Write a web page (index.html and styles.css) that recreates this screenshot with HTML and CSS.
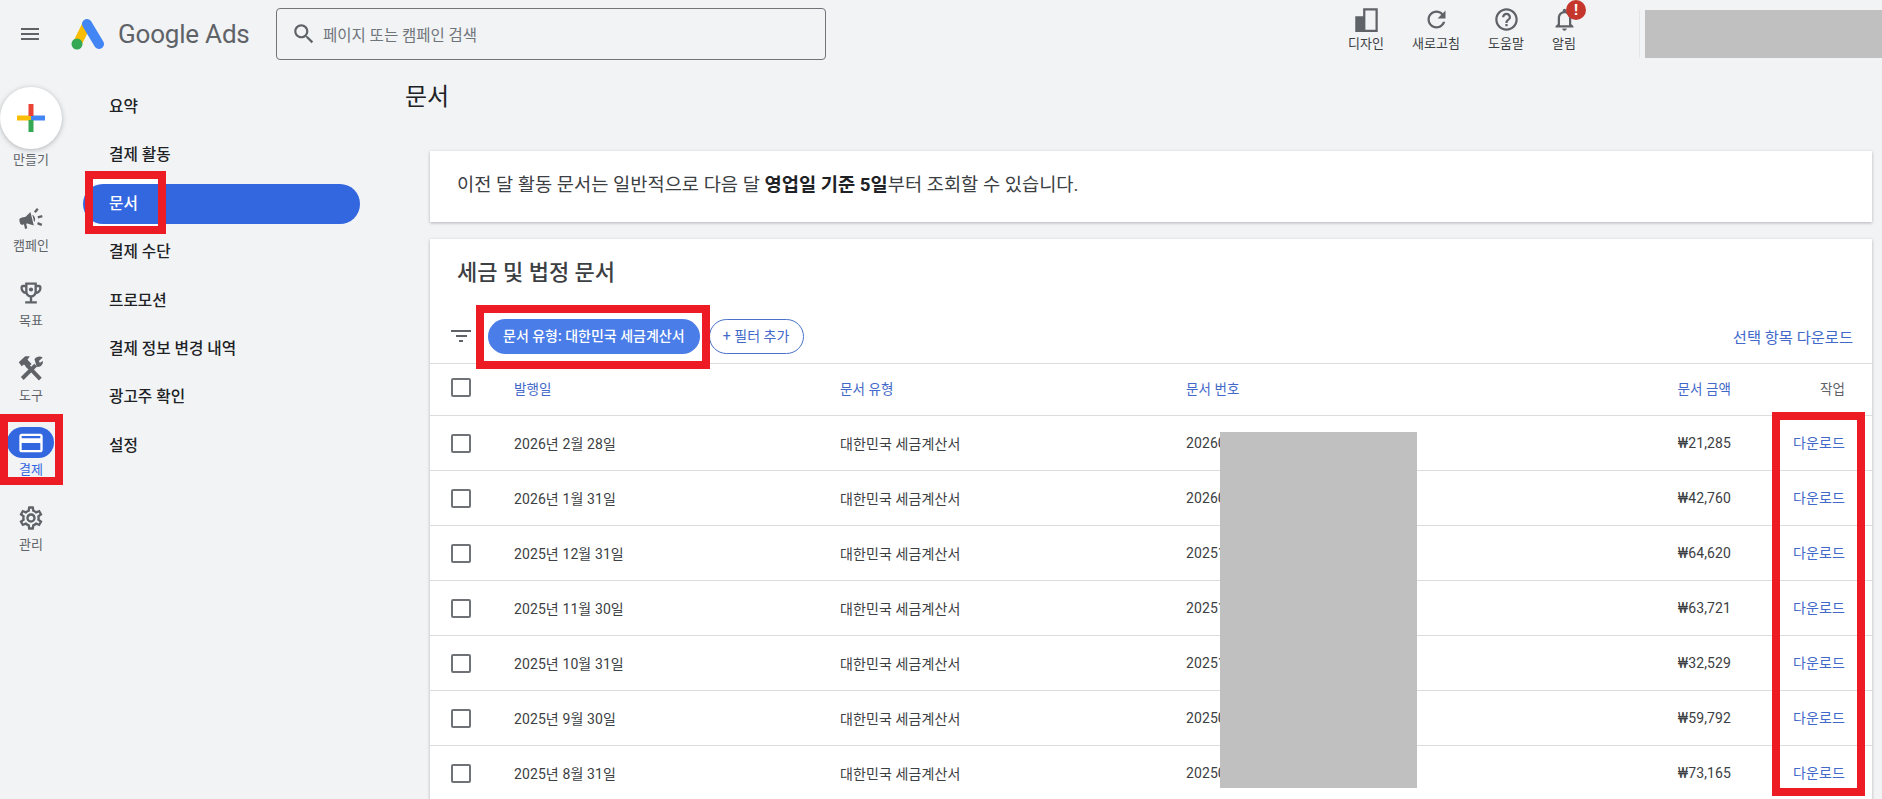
FILE: index.html
```html
<!DOCTYPE html>
<html lang="ko">

<head>
  <meta charset="UTF-8">
  <title>Google Ads - 문서</title>
  <link rel="stylesheet" href="styles.css">
</head>

<body>
  <header class="topbar">
    <svg class="menu-icon" viewBox="0 0 24 24"><path d="M3 18h18v-2H3v2zm0-5h18v-2H3v2zm0-7v2h18V6H3z"/></svg>
    <svg class="logo" viewBox="0 0 36 32">
      <path d="M17 6 L7 26" stroke="#fbbc04" stroke-width="9" stroke-linecap="round"/>
      <path d="M17 6 L29 26" stroke="#4285f4" stroke-width="10" stroke-linecap="round"/>
      <circle cx="7" cy="26" r="5.5" fill="#34a853"/>
    </svg>
    <span class="brand">Google Ads</span>
    <div class="search">
      <svg class="search-icon" viewBox="0 0 24 24"><path d="M15.5 14h-.79l-.28-.27C15.41 12.59 16 11.11 16 9.5 16 5.91 13.09 3 9.5 3S3 5.91 3 9.5 5.91 16 9.5 16c1.61 0 3.09-.59 4.23-1.57l.27.28v.79l5 4.99L20.49 19l-4.99-5zm-6 0C7.01 14 5 11.99 5 9.5S7.01 5 9.5 5 14 7.01 14 9.5 11.99 14 9.5 14z"/></svg>
      <span>페이지 또는 캠페인 검색</span>
    </div>
    <div class="actions">
      <div class="action">
        <svg viewBox="0 0 24 24"><path d="M9 2h13v21H2V9h7V2zm2 2v17h9V4h-9z"/></svg>
        <span>디자인</span>
      </div>
      <div class="action">
        <svg viewBox="0 0 24 24"><path d="M17.65 6.35C16.2 4.9 14.21 4 12 4c-4.42 0-7.99 3.58-7.99 8s3.57 8 7.99 8c3.73 0 6.84-2.55 7.73-6h-2.08c-.82 2.33-3.04 4-5.65 4-3.31 0-6-2.69-6-6s2.69-6 6-6c1.66 0 3.14.69 4.22 1.78L13 11h7V4l-2.35 2.35z"/></svg>
        <span>새로고침</span>
      </div>
      <div class="action">
        <svg viewBox="0 0 24 24"><path d="M11 18h2v-2h-2v2zm1-16C6.48 2 2 6.48 2 12s4.48 10 10 10 10-4.48 10-10S17.52 2 12 2zm0 18c-4.41 0-8-3.59-8-8s3.59-8 8-8 8 3.59 8 8-3.59 8-8 8zm0-14c-2.21 0-4 1.79-4 4h2c0-1.1.9-2 2-2s2 .9 2 2c0 2-3 1.75-3 5h2c0-2.25 3-2.5 3-5 0-2.21-1.79-4-4-4z"/></svg>
        <span>도움말</span>
      </div>
      <div class="action action-bell">
        <svg viewBox="0 0 24 24"><path d="M12 22c1.1 0 2-.9 2-2h-4c0 1.1.9 2 2 2zm6-6v-5c0-3.07-1.63-5.64-4.5-6.32V4c0-.83-.67-1.5-1.5-1.5s-1.5.67-1.5 1.5v.68C7.64 5.36 6 7.92 6 11v5l-2 2v1h16v-1l-2-2zm-2 1H8v-6c0-2.48 1.51-4.5 4-4.5s4 2.02 4 4.5v6z"/></svg>
        <span>알림</span>
        <b class="badge">!</b>
      </div>
    </div>
    <div class="account"></div>
  </header>

  <div class="layout">
    <nav class="rail">
      <div class="create">
        <div class="create-btn">
          <svg viewBox="0 0 28 28">
            <rect x="0" y="11.5" width="14" height="5" fill="#fbbc04"/>
            <rect x="14" y="11.5" width="14" height="5" fill="#4285f4"/>
            <rect x="11.5" y="0" width="5" height="12" fill="#ea4335"/>
            <rect x="11.5" y="16" width="5" height="12" fill="#34a853"/>
          </svg>
        </div>
        <span>만들기</span>
      </div>
      <a class="rail-item">
        <span class="rail-icon"><svg class="tilt" viewBox="0 0 24 24"><path d="M18 11v2h4v-2h-4zm-2 6.61c.96.71 2.21 1.65 3.2 2.39.4-.53.8-1.07 1.2-1.6-.99-.74-2.24-1.68-3.2-2.4-.4.54-.8 1.08-1.2 1.61zM20.4 5.6c-.4-.53-.8-1.07-1.2-1.6-.99.74-2.24 1.68-3.2 2.4.4.53.8 1.07 1.2 1.6.96-.72 2.21-1.65 3.2-2.4zM4 9c-1.1 0-2 .9-2 2v2c0 1.1.9 2 2 2h1v4h2v-4h1l5 3V6L8 9H4zm11.5 3c0-1.33-.58-2.53-1.5-3.35v6.69c.92-.81 1.5-2.01 1.5-3.34z"/></svg></span>
        <span>캠페인</span>
      </a>
      <a class="rail-item">
        <span class="rail-icon"><svg viewBox="0 0 24 24"><path d="M19 5h-2V3H7v2H5c-1.1 0-2 .9-2 2v1c0 2.55 1.92 4.63 4.39 4.94.63 1.5 1.98 2.63 3.61 2.96V19H7v2h10v-2h-4v-3.1c1.63-.33 2.98-1.46 3.61-2.96C19.08 12.63 21 10.55 21 8V7c0-1.1-.9-2-2-2zM5 8V7h2v3.82C5.84 10.4 5 9.3 5 8zm7 6c-1.65 0-3-1.35-3-3V5h6v6c0 1.65-1.35 3-3 3zm7-6c0 1.3-.84 2.4-2 2.82V7h2v1z"/><circle cx="12" cy="9" r="1.8"/></svg></span>
        <span>목표</span>
      </a>
      <a class="rail-item">
        <span class="rail-icon"><svg viewBox="0 0 24 24"><path d="M8.5 9.5 L20 21.5 M16 9.5 L4.5 21" fill="none" stroke="#5f6368" stroke-width="3.4"/><path d="M1.5 7 7 2h4L9 5l3.5 3.5-3.5 3.5L6 9 4 10.5zM15 4.5C16.5 2 20 1.5 22 3l-3.2 3 .8 1.6 2.6-1.6c.4 2.6-1.6 5.6-5.4 5z"/></svg></span>
        <span>도구</span>
      </a>
      <a class="rail-item active">
        <span class="rail-icon"><svg viewBox="0 0 24 24"><path d="M20 4H4c-1.11 0-2 .89-2 2v12c0 1.11.89 2 2 2h16c1.11 0 2-.89 2-2V6c0-1.11-.89-2-2-2zm0 14H4v-6h16v6zm0-10H4V6h16v2z"/></svg></span>
        <span>결제</span>
      </a>
      <a class="rail-item">
        <span class="rail-icon"><svg viewBox="0 0 24 24"><path d="M19.43 12.98c.04-.32.07-.64.07-.98 0-.34-.03-.66-.07-.98l2.11-1.65c.19-.15.24-.42.12-.64l-2-3.46c-.09-.16-.26-.25-.44-.25-.06 0-.12.01-.17.03l-2.49 1c-.52-.4-1.08-.73-1.69-.98l-.38-2.65C14.46 2.18 14.25 2 14 2h-4c-.25 0-.46.18-.49.42l-.38 2.65c-.61.25-1.17.59-1.69.98l-2.49-1c-.06-.02-.12-.03-.18-.03-.17 0-.34.09-.43.25l-2 3.46c-.13.22-.07.49.12.64l2.11 1.65c-.04.32-.07.65-.07.98 0 .33.03.66.07.98l-2.11 1.65c-.19.15-.24.42-.12.64l2 3.46c.09.16.26.25.44.25.06 0 .12-.01.17-.03l2.49-1c.52.4 1.08.73 1.69.98l.38 2.65c.03.24.24.42.49.42h4c.25 0 .46-.18.49-.42l.38-2.65c.61-.25 1.17-.59 1.69-.98l2.49 1c.06.02.12.03.18.03.17 0 .34-.09.43-.25l2-3.46c.12-.22.07-.49-.12-.64l-2.11-1.65zm-1.98-1.71c.04.31.05.52.05.73 0 .21-.02.43-.05.73l-.14 1.13.89.7 1.08.84-.7 1.21-1.27-.51-1.04-.42-.9.68c-.43.32-.84.56-1.25.73l-1.06.43-.16 1.13-.2 1.35h-1.4l-.19-1.35-.16-1.13-1.06-.43c-.43-.18-.83-.41-1.23-.71l-.91-.7-1.06.43-1.27.51-.7-1.21 1.08-.84.89-.7-.14-1.13c-.03-.31-.05-.54-.05-.74s.02-.43.05-.73l.14-1.13-.89-.7-1.08-.84.7-1.21 1.27.51 1.04.42.9-.68c.43-.32.84-.56 1.25-.73l1.06-.43.16-1.13.2-1.35h1.39l.19 1.35.16 1.13 1.06.43c.43.18.83.41 1.23.71l.91.7 1.06-.43 1.27-.51.7 1.21-1.07.85-.89.7.14 1.13zM12 8c-2.21 0-4 1.79-4 4s1.79 4 4 4 4-1.79 4-4-1.79-4-4-4zm0 6c-1.1 0-2-.9-2-2s.9-2 2-2 2 .9 2 2-.9 2-2 2z"/></svg></span>
        <span>관리</span>
      </a>
    </nav>

    <ul class="subnav">
      <li>요약</li>
      <li>결제 활동</li>
      <li class="active">문서</li>
      <li>결제 수단</li>
      <li>프로모션</li>
      <li>결제 정보 변경 내역</li>
      <li>광고주 확인</li>
      <li>설정</li>
    </ul>

    <main class="content">
      <h1>문서</h1>

      <div class="card notice">
        이전 달 활동 문서는 일반적으로 다음 달 <b>영업일 기준 5일</b>부터 조회할 수 있습니다.
      </div>

      <section class="card docs">
        <h2>세금 및 법정 문서</h2>
        <div class="filters">
          <svg class="filter-icon" viewBox="0 0 20 14"><path d="M0 1h20v2H0zM5 6h11v2H5zM8 11h4v2H8z"/></svg>
          <span class="chip">문서 유형: 대한민국 세금계산서</span>
          <span class="chip-add">+ 필터 추가</span>
          <a class="download-all">선택 항목 다운로드</a>
        </div>
        <table>
          <thead>
            <tr>
              <th class="col-check"><i class="checkbox"></i></th>
              <th class="col-date">발행일</th>
              <th class="col-type">문서 유형</th>
              <th class="col-num">문서 번호</th>
              <th class="col-amount">문서 금액</th>
              <th class="col-action">작업</th>
            </tr>
          </thead>
          <tbody>
            <tr>
              <td><i class="checkbox"></i></td>
              <td>2026년 2월 28일</td>
              <td>대한민국 세금계산서</td>
              <td>20260</td>
              <td class="col-amount">₩21,285</td>
              <td class="col-action"><a>다운로드</a></td>
            </tr>
            <tr>
              <td><i class="checkbox"></i></td>
              <td>2026년 1월 31일</td>
              <td>대한민국 세금계산서</td>
              <td>20260</td>
              <td class="col-amount">₩42,760</td>
              <td class="col-action"><a>다운로드</a></td>
            </tr>
            <tr>
              <td><i class="checkbox"></i></td>
              <td>2025년 12월 31일</td>
              <td>대한민국 세금계산서</td>
              <td>20251</td>
              <td class="col-amount">₩64,620</td>
              <td class="col-action"><a>다운로드</a></td>
            </tr>
            <tr>
              <td><i class="checkbox"></i></td>
              <td>2025년 11월 30일</td>
              <td>대한민국 세금계산서</td>
              <td>20251</td>
              <td class="col-amount">₩63,721</td>
              <td class="col-action"><a>다운로드</a></td>
            </tr>
            <tr>
              <td><i class="checkbox"></i></td>
              <td>2025년 10월 31일</td>
              <td>대한민국 세금계산서</td>
              <td>20251</td>
              <td class="col-amount">₩32,529</td>
              <td class="col-action"><a>다운로드</a></td>
            </tr>
            <tr>
              <td><i class="checkbox"></i></td>
              <td>2025년 9월 30일</td>
              <td>대한민국 세금계산서</td>
              <td>20250</td>
              <td class="col-amount">₩59,792</td>
              <td class="col-action"><a>다운로드</a></td>
            </tr>
            <tr>
              <td><i class="checkbox"></i></td>
              <td>2025년 8월 31일</td>
              <td>대한민국 세금계산서</td>
              <td>20250</td>
              <td class="col-amount">₩73,165</td>
              <td class="col-action"><a>다운로드</a></td>
            </tr>
          </tbody>
        </table>
      </section>
    </main>
  </div>

  <!-- annotations drawn over the screenshot -->
  <div class="redact"></div>
  <div class="mark mark-rail"></div>
  <div class="mark mark-nav"></div>
  <div class="mark mark-chip"></div>
  <div class="mark mark-download"></div>
</body>

</html>
```

FILE: styles.css
```css
html, body {
  height: 799px;
  overflow: hidden;
}

body {
  position: relative;
  margin: 0;
  background: #f1f3f5;
  color: #3c4043;
  font-family: Roboto, "Noto Sans CJK KR", sans-serif;
}

svg {
  display: block;
  fill: #5f6368;
}

/* top bar */
.topbar {
  display: flex;
  align-items: center;
  height: 68px;
  padding: 0 0 2px 18px;
}

.menu-icon {
  width: 24px;
  height: 24px;
}

.logo {
  width: 36px;
  height: 32px;
  margin-left: 28px;
}

.brand {
  margin-left: 12px;
  width: 158px;
  color: #5f6368;
  font-size: 26px;
  letter-spacing: -.2px;
}

.search {
  display: flex;
  align-items: center;
  box-sizing: border-box;
  width: 550px;
  height: 52px;
  padding-left: 14px;
  border: 1px solid #70757a;
  border-radius: 4px;
  color: #70757a;
  font-size: 15.5px;
}

.search-icon {
  width: 26px;
  height: 26px;
  margin-right: 6px;
}

.actions {
  display: flex;
  align-self: flex-start;
  margin-left: auto;
}

.action {
  position: relative;
  display: flex;
  flex-direction: column;
  align-items: center;
  width: 70px;
  padding-top: 6px;
  font-size: 13px;
  line-height: 16px;
}

.action svg {
  width: 27px;
  height: 27px;
  margin-bottom: 3px;
}

.action-bell {
  width: 46px;
}

.badge {
  position: absolute;
  top: 0;
  left: 25px;
  width: 20px;
  height: 20px;
  border-radius: 50%;
  background: #c5372c;
  color: #fff;
  font-size: 15px;
  line-height: 20px;
  text-align: center;
}

.account {
  width: 237px;
  height: 48px;
  margin-left: 58px;
  background: #c0c0c0;
  box-shadow: -5px 0 0 #f1f3f5, -6px 0 0 #e4e6e8;
}

/* left rail */
.layout {
  display: flex;
  align-items: flex-start;
}

.rail {
  width: 62px;
  flex-shrink: 0;
  padding-top: 17px;
  font-size: 13px;
  color: #5f6368;
  text-align: center;
}

.create {
  margin-bottom: 35px;
}

.create-btn {
  display: flex;
  align-items: center;
  justify-content: center;
  width: 62px;
  height: 62px;
  margin-bottom: 3px;
  border-radius: 50%;
  background: #fff;
  box-shadow: 0 1px 5px rgba(60, 64, 67, .35);
}

.create-btn svg {
  width: 28px;
  height: 28px;
}

.create span {
  line-height: 16px;
}

.rail-item {
  display: block;
  height: 74.75px;
  line-height: 16px;
}

.rail-icon {
  display: flex;
  align-items: center;
  justify-content: center;
  width: 47px;
  height: 31px;
  margin: 0 auto 4px 7px;
  border-radius: 16px;
}

.rail-icon svg {
  width: 28px;
  height: 28px;
}

.rail-icon .tilt {
  transform: rotate(-14deg);
}

.rail-item.active .rail-icon {
  background: #3367e0;
}

.rail-item.active .rail-icon svg {
  fill: #fff;
}

.rail-item.active {
  color: #3367e0;
}

/* second level nav */
.subnav {
  display: flex;
  flex-direction: column;
  gap: 8.4px;
  width: 277px;
  flex-shrink: 0;
  margin: 17px 0 0 21px;
  padding: 0;
  list-style: none;
  font-size: 15.7px;
  font-weight: 500;
  color: #202124;
}

.subnav li {
  height: 40px;
  padding-left: 26px;
  border-radius: 0 20px 20px 0;
  line-height: 40px;
}

.subnav li.active {
  border-radius: 20px;
  background: #3367e0;
  color: #fff;
}

/* content */
.content {
  flex: 1;
  min-width: 0;
  margin-left: 45px;
}

h1 {
  margin: 11px 0 38px;
  font-size: 24px;
  font-weight: 400;
  line-height: 32px;
  color: #202124;
}

.card {
  margin: 0 10px 17px 25px;
  background: #fff;
  box-shadow: 0 1px 3px rgba(60, 64, 67, .35);
}

.notice {
  height: 71px;
  padding-left: 27px;
  font-size: 18.7px;
  line-height: 68px;
}

.notice b {
  color: #202124;
  font-weight: 700;
}

.docs h2 {
  margin: 0;
  padding: 19px 0 0 27px;
  font-size: 22px;
  font-weight: 500;
  line-height: 30px;
  color: #3c4043;
}

.filters {
  display: flex;
  align-items: center;
  box-sizing: border-box;
  height: 76px;
  padding: 21px 19px 0 21px;
  border-bottom: 1px solid #dadce0;
}

.filter-icon {
  width: 20px;
  height: 14px;
  margin-right: 17px;
}

.chip {
  padding: 0 15px;
  border-radius: 18px;
  background: #4a7de8;
  color: #fff;
  font-size: 14px;
  font-weight: 500;
  line-height: 35px;
}

.chip-add {
  box-sizing: border-box;
  width: 95px;
  margin-left: 9px;
  border: 1px solid #4a72c9;
  border-radius: 18px;
  color: #4269c9;
  font-size: 14px;
  line-height: 33px;
  text-align: center;
}

.download-all {
  margin-left: auto;
  color: #4269c9;
  font-size: 15.3px;
}

table {
  width: 100%;
  table-layout: fixed;
  border-collapse: collapse;
  font-size: 14px;
  letter-spacing: .1px;
}

th {
  height: 47px;
  border-bottom: 1px solid #dadce0;
  padding: 0 0 4px;
  color: #4269c9;
  font-size: 13.5px;
  font-weight: 400;
  text-align: left;
}

td {
  height: 54px;
  border-bottom: 1px solid #dadce0;
  padding: 0;
}

.col-check { width: 84px; }
.col-date { width: 326px; }
.col-type { width: 346px; }
.col-num { width: 425px; }

th.col-amount {
  width: 120px;
}

.col-amount {
  text-align: right;
}

.col-action {
  padding-right: 27px;
  text-align: right;
}

th.col-action {
  color: #5f6368;
}

td a {
  display: inline-block;
  margin-bottom: 3px;
  color: #4269c9;
}

.checkbox {
  display: block;
  box-sizing: border-box;
  width: 20px;
  height: 19px;
  margin-left: 21px;
  border: 2px solid #6f7377;
  border-radius: 2px;
}

/* gray box and red boxes pasted on top */
.redact {
  position: absolute;
  left: 1220px;
  top: 432px;
  width: 197px;
  height: 356px;
  background: #c0c0c0;
}

.mark {
  position: absolute;
  box-sizing: border-box;
  border: 8px solid #ed1c24;
}

.mark-rail {
  left: 0;
  top: 414px;
  width: 63px;
  height: 71px;
}

.mark-nav {
  left: 85px;
  top: 171px;
  width: 81px;
  height: 63px;
  background: linear-gradient(#fff 5px, transparent 5px, transparent 45px, #fff 45px);
}

.mark-chip {
  left: 476px;
  top: 305px;
  width: 234px;
  height: 64px;
}

.mark-download {
  left: 1772px;
  top: 412px;
  width: 93px;
  height: 384px;
}
```
